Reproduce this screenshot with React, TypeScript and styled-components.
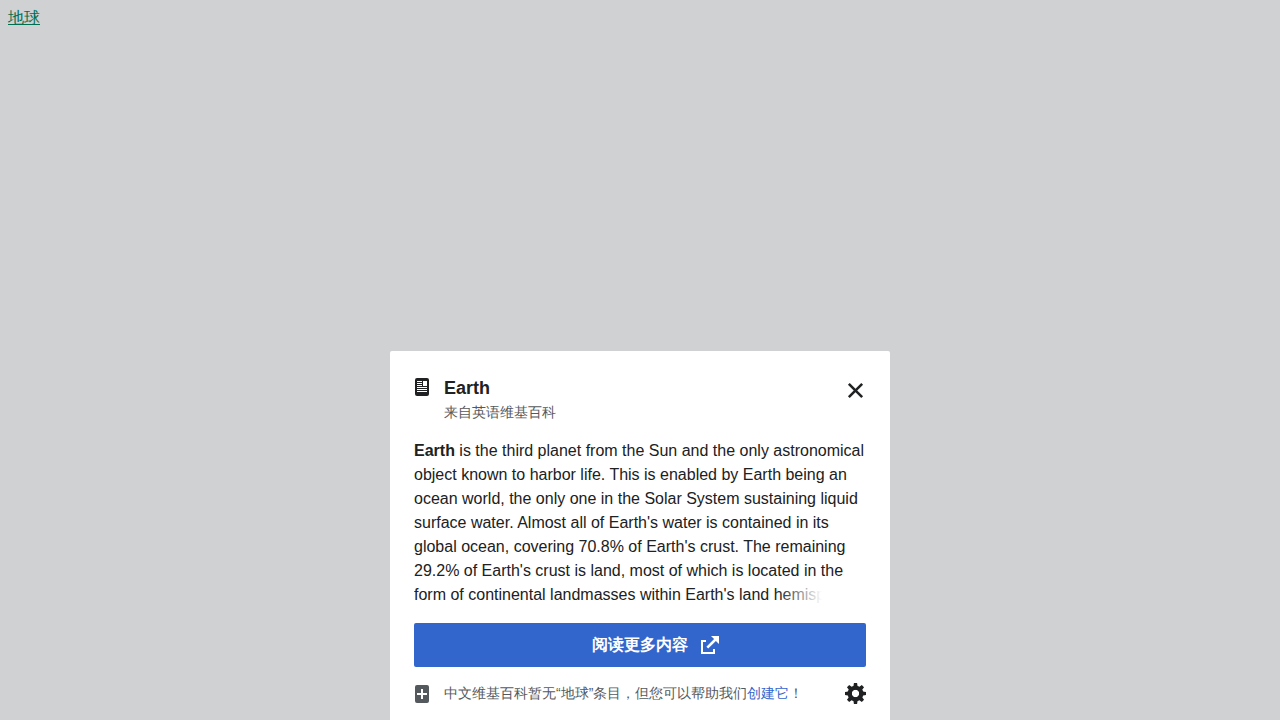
import React from "react";
import styled, { createGlobalStyle } from "styled-components";

const GlobalStyle = createGlobalStyle`
  *, *::before, *::after { box-sizing: border-box; }
  html { background: #d0d1d3; }
  body {
    margin: 0;
    font-family: "Liberation Sans", sans-serif;
    color: #202122;
  }
`;

const Page = styled.main`
  min-height: 100vh;
  padding: 8px;
  font-size: 16px;
  line-height: 20px;
`;

const TopicLink = styled.a`
  color: #006e50;
  text-decoration: underline;
`;

const Sheet = styled.section`
  position: fixed;
  right: 0;
  bottom: 0;
  left: 0;
  width: 100%;
  max-width: 500px;
  margin: 0 auto;
  padding: 24px 24px 16px;
  border-radius: 2px 2px 0 0;
  background: #fff;
`;

const Header = styled.header`
  display: flex;
  align-items: flex-start;
  gap: 14px;
  padding-top: 2px;
`;

const Heading = styled.div`
  flex: 1;
`;

const Title = styled.h2`
  margin: 0;
  font-size: 18px;
  line-height: 22px;
  font-weight: 700;
`;

const Source = styled.p`
  margin: 0;
  padding-top: 2px;
  font-size: 14px;
  line-height: 22px;
  color: #54595d;
`;

const IconButton = styled.button`
  display: flex;
  padding: 0;
  border: 0;
  background: none;
  color: #202122;
  cursor: pointer;
`;

const HeaderButton = styled(IconButton)`
  padding-top: 3px;
`;

const Extract = styled.div`
  position: relative;
  height: 168px;
  margin-top: 16px;
  overflow: hidden;
  font-size: 16px;
  line-height: 24px;

  p { margin: 0; }

  &::after {
    content: "";
    position: absolute;
    right: 0;
    bottom: 0;
    width: 88px;
    height: 24px;
    background: linear-gradient(to right, rgba(255, 255, 255, 0), #fff 50%);
  }
`;

const ReadMore = styled.button`
  display: flex;
  align-items: center;
  justify-content: center;
  gap: 13px;
  width: 100%;
  height: 44px;
  margin-top: 16px;
  padding: 0 0 0 31px;
  border: 0;
  border-radius: 2px;
  background: #36c;
  color: #fff;
  font: inherit;
  font-size: 16px;
  font-weight: 700;
  cursor: pointer;
`;

const Footer = styled.footer`
  display: flex;
  align-items: flex-end;
  gap: 14px;
  margin-top: 15px;
  font-size: 14px;
  line-height: 22px;
  color: #54595d;
`;

const Notice = styled.p`
  flex: 1;
  margin: 0;
`;

const CreateLink = styled.a`
  color: #36c;
  text-decoration: none;
`;

const PageIcon = styled.svg`
  display: block;
  flex: none;
  width: 16px;
  height: 20px;
  fill: currentColor;
`;

const ActionIcon = styled.svg`
  display: block;
  width: 21px;
  height: 21px;
  fill: currentColor;
`;

const ExternalIcon = styled.svg`
  display: block;
  width: 18px;
  height: 18px;
  fill: currentColor;
`;

const TOOTH = "M1.5-10h-3l-1 6.5h5m0 7h-5l1 6.5h3";

export default function App() {
  return (
    <>
      <GlobalStyle />
      <Page>
        <TopicLink href="#earth">地球</TopicLink>
      </Page>
      <Sheet role="dialog" aria-labelledby="preview-title">
        <Header>
          <PageIcon viewBox="2 0 16 20" aria-hidden="true">
            <path d="M5 1a2 2 0 0 0-2 2v14a2 2 0 0 0 2 2h10a2 2 0 0 0 2-2V3a2 2 0 0 0-2-2zm0 3h5v1H5zm0 2h5v1H5zm0 2h5v1H5zm10 7H5v-1h10zm0-2H5v-1h10zm0-2H5v-1h10zm0-2h-4V4h4z" />
          </PageIcon>
          <Heading>
            <Title id="preview-title">Earth</Title>
            <Source>来自英语维基百科</Source>
          </Heading>
          <HeaderButton type="button" aria-label="关闭">
            <ActionIcon viewBox="0 0 20 20" aria-hidden="true">
              <path d="M4.5 2.8 17.2 15.5l-1.7 1.7L2.8 4.5z" />
              <path d="M17.2 4.5 4.5 17.2l-1.7-1.7L15.5 2.8z" />
            </ActionIcon>
          </HeaderButton>
        </Header>
        <Extract lang="en">
          <p>
            <b>Earth</b> is the third planet from the Sun and the only astronomical
            object known to harbor life. This is enabled by Earth being an ocean
            world, the only one in the Solar System sustaining liquid surface
            water. Almost all of Earth's water is contained in its global ocean,
            covering 70.8% of Earth's crust. The remaining 29.2% of Earth's crust
            is land, most of which is located in the form of continental
            landmasses within Earth's land hemisphere.
          </p>
        </Extract>
        <ReadMore type="button">
          阅读更多内容
          <ExternalIcon viewBox="0 0 18 18" aria-hidden="true">
            <path d="M0 4h5v2H2v10h10v-3h2v5H0z" />
            <path d="M10 0h8v8l-3.1-3.1-7.7 7.7-1.8-1.8 7.7-7.7z" />
          </ExternalIcon>
        </ReadMore>
        <Footer>
          <PageIcon viewBox="2 0 16 20" aria-hidden="true">
            <path d="M15 1H5a2 2 0 0 0-2 2v14a2 2 0 0 0 2 2h10a2 2 0 0 0 2-2V3a2 2 0 0 0-2-2zm0 10h-4v4H9v-4H5V9h4V5h2v4h4z" />
          </PageIcon>
          <Notice>
            中文维基百科暂无“地球”条目，但您可以帮助我们<CreateLink href="#create">创建它</CreateLink>！
          </Notice>
          <IconButton type="button" aria-label="设置">
            <ActionIcon viewBox="0 0 20 20" aria-hidden="true">
              <g transform="translate(10 10)">
                <path d={TOOTH} />
                <path d={TOOTH} transform="rotate(45)" />
                <path d={TOOTH} transform="rotate(90)" />
                <path d={TOOTH} transform="rotate(135)" />
              </g>
              <path d="M10 2.5a7.5 7.5 0 0 0 0 15 7.5 7.5 0 0 0 0-15v4a3.5 3.5 0 0 1 0 7 3.5 3.5 0 0 1 0-7" />
            </ActionIcon>
          </IconButton>
        </Footer>
      </Sheet>
    </>
  );
}
